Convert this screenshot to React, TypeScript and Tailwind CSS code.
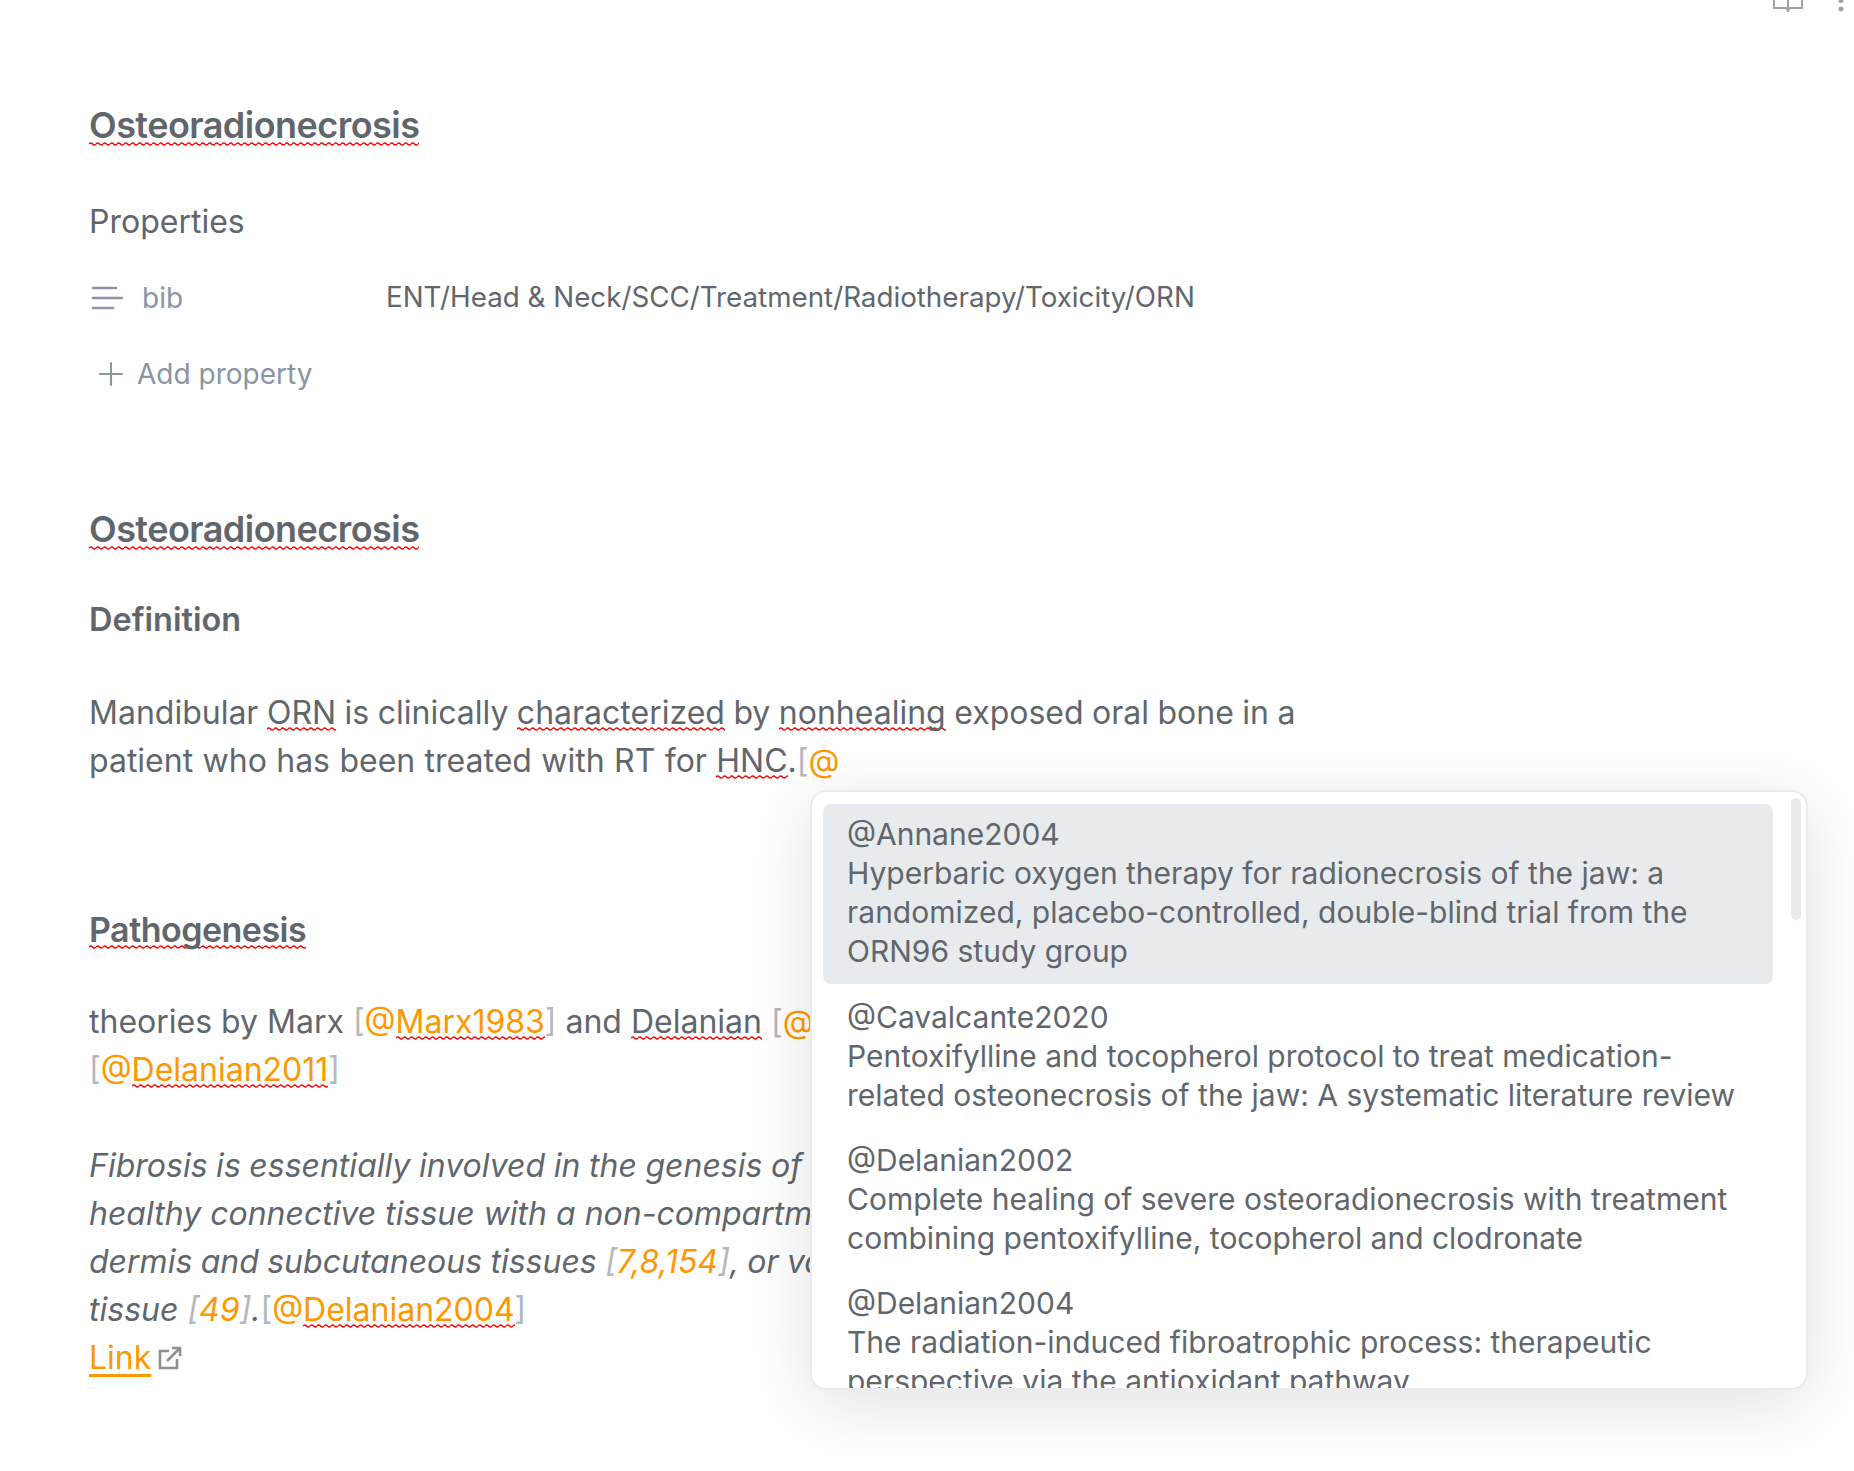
import React from "react";
import {Plus} from "lucide-react";

// thin red squiggle like the browser's spell check
const Spell: React.FC<{children: React.ReactNode}> = ({children}) => (
    <span className={`bg-[url("data:image/svg+xml,%3Csvg%20xmlns='http://www.w3.org/2000/svg'%20width='7'%20height='4'%3E%3Cpath%20d='M0%202Q1.75%200%203.5%202T7%202'%20fill='none'%20stroke='%23ff0000'%20stroke-width='1.3'/%3E%3C/svg%3E")] bg-[length:7px_4px] bg-[position:0_calc(100%-1px)] bg-repeat-x`}>{children}</span>
);

const Cite: React.FC<{children: React.ReactNode}> = ({children}) => (
    <>
        <span className="text-[#b4b8bd]">[</span>
        <span className="text-[#ff9800]">{children}</span>
        <span className="text-[#b4b8bd]">]</span>
    </>
);

const suggestions = [
    {
        key: "@Annane2004",
        lines: [
            "Hyperbaric oxygen therapy for radionecrosis of the jaw: a",
            "randomized, placebo-controlled, double-blind trial from the",
            "ORN96 study group",
        ],
    },
    {
        key: "@Cavalcante2020",
        lines: [
            "Pentoxifylline and tocopherol protocol to treat medication-",
            "related osteonecrosis of the jaw: A systematic literature review",
        ],
    },
    {
        key: "@Delanian2002",
        lines: [
            "Complete healing of severe osteoradionecrosis with treatment",
            "combining pentoxifylline, tocopherol and clodronate",
        ],
    },
    {
        key: "@Delanian2004",
        lines: [
            "The radiation-induced fibroatrophic process: therapeutic",
            "perspective via the antioxidant pathway",
        ],
    },
];

export default function App() {
    return (
        <div className="relative h-[1471px] w-[1854px] overflow-hidden bg-white font-['Inter',sans-serif] text-[#61666d]">
            {/* top right toolbar, cut by the window edge */}
            <div className="absolute right-0 top-0 flex items-start gap-[35px] pr-[10px]">
                <svg width="30" height="13" viewBox="0 0 30 13" fill="none" stroke="#9aa1aa" strokeWidth="2">
                    <path d="M1 0V8H12C13.5 8 15 9 15 12C15 9 16.5 8 18 8H29V0M15 0V12"/>
                </svg>
                <svg width="6" height="14" viewBox="0 0 6 14" fill="#9aa1aa">
                    <circle cx="3" cy="0.5" r="2.5"/>
                    <circle cx="3" cy="9" r="2.5"/>
                </svg>
            </div>

            <div className="pl-[89px] pt-[101px]">
                <h1 className="text-[36px] leading-[48px] font-semibold tracking-[-0.015em]"><Spell>Osteoradionecrosis</Spell></h1>
                <div className="mt-[49px] text-[32px] leading-[48px]">Properties</div>

                <div className="mt-[28px] flex h-[48px] items-center text-[28px]">
                    <svg width="32" height="24" viewBox="0 0 32 24" fill="none" stroke="#8a94a3" strokeWidth="2.6" strokeLinecap="round" className="ml-[2px]">
                        <path d="M2 2H25M2 12H31M2 22H22"/>
                    </svg>
                    <span className="ml-[19px] w-[244px] text-[#8a94a3]">bib</span>
                    <span className="whitespace-nowrap text-[27.75px]">ENT/Head &amp; Neck/SCC/Treatment/Radiotherapy/Toxicity/ORN</span>
                </div>
                <div className="mt-[28px] flex h-[48px] items-center text-[28px] text-[#8a94a3]">
                    <Plus size={38} strokeWidth={1.3} className="ml-[3px]"/>
                    <span className="ml-[7px]">Add property</span>
                </div>

                <h2 className="mt-[107px] text-[36px] leading-[48px] font-semibold tracking-[-0.015em]"><Spell>Osteoradionecrosis</Spell></h2>
                <h3 className="mt-[43px] text-[32.5px] leading-[48px] font-semibold">Definition</h3>

                <div className="mt-[45px] text-[32px] leading-[48px] whitespace-nowrap">
                    <div className="[word-spacing:-0.5px]">Mandibular <Spell>ORN</Spell> is clinically <Spell>characterized</Spell> by <Spell>nonhealing</Spell> exposed oral bone in a</div>
                    <div className="[word-spacing:0.4px]">patient who has been treated with RT for <Spell>HNC</Spell>.<span className="text-[#b4b8bd]">[</span><span className="text-[#ff9800]">@</span></div>
                </div>

                <h3 className="mt-[121px] text-[34px] leading-[48px] font-semibold tracking-[-0.015em]"><Spell>Pathogenesis</Spell></h3>

                <div className="mt-[44px] text-[32px] leading-[48px] whitespace-nowrap">
                    <div>theories by Marx <Cite>@<Spell>Marx1983</Spell></Cite> and <Spell>Delanian</Spell> <span className="text-[#b4b8bd]">[</span><span className="text-[#ff9800]">@</span></div>
                    <div><Cite>@<Spell>Delanian2011</Spell></Cite></div>
                </div>

                <div className="mt-[48px] text-[32px] leading-[48px] whitespace-nowrap">
                    <div className="italic [word-spacing:-0.4px]">Fibrosis is essentially involved in the genesis of</div>
                    <div className="italic">healthy connective tissue with a non-compartm</div>
                    <div className="italic [word-spacing:-0.6px]">dermis and subcutaneous tissues <Cite>7,8,154</Cite>, or va</div>
                    <div><span className="italic">tissue <Cite>49</Cite>.</span><Cite>@<Spell>Delanian2004</Spell></Cite></div>
                    <div className="flex items-center">
                        <span className="text-[#ff9800] underline decoration-[#ff9800] decoration-[3px] underline-offset-[5px]">Link</span>
                        <svg width="24" height="24" viewBox="0 0 24 24" fill="none" stroke="#8f8f8f" strokeWidth="2.6" className="ml-[7px]">
                            <path d="M11 5H2V22H19V13M14 2H22V10M22 2L9 15"/>
                        </svg>
                    </div>
                </div>
            </div>

            {/* suggestion popup over the editor */}
            <div className="absolute left-[810px] top-[790px] h-[600px] w-[998px] overflow-hidden rounded-[16px] border-2 border-[#e9ebee] bg-white pl-[11px] pr-[33px] pt-[12px] shadow-[0_14px_70px_rgba(0,0,0,0.12)]">
                <div className="absolute right-[5px] top-[6px] h-[122px] w-[10px] rounded-[5px] bg-[#e8ebee]"></div>
                {suggestions.map((item, i) => (
                    <div key={item.key} className={`mb-[2px] whitespace-nowrap rounded-[8px] px-[24px] text-[30px] leading-[39px] ${i === 0 ? "bg-[#e8ebee] pb-[13px] pt-[11px]" : "py-[12px]"}`}>
                        <div>{item.key}</div>
                        {item.lines.map((line) => <div key={line}>{line}</div>)}
                    </div>
                ))}
            </div>
        </div>
    );
}
